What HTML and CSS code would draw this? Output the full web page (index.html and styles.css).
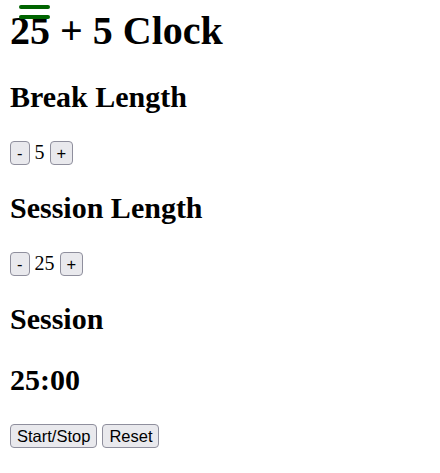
FILE: index.html
```html
<!DOCTYPE html>
<html lang="en">
<head>
<meta charset="utf-8">
<title>25 + 5 Clock</title>
<link rel="stylesheet" href="styles.css">
</head>
<body>
<div class="menu-icon" aria-hidden="true"><span class="bar"></span><span class="bar"></span></div>
<div class="app">
  <h1 class="title">25 + 5 Clock</h1>
  <h2 class="label">Break Length</h2>
  <div class="row">
    <button class="btn">-</button> <span class="value">5</span> <button class="btn">+</button>
  </div>
  <h2 class="label">Session Length</h2>
  <div class="row">
    <button class="btn">-</button> <span class="value">25</span> <button class="btn">+</button>
  </div>
  <h2 class="label">Session</h2>
  <h2 class="label">25:00</h2>
  <div class="row">
    <button class="btn">Start/Stop</button> <button class="btn">Reset</button>
  </div>
</div>
</body>
</html>
```
FILE: styles.css
```css
html, body {
  background: #ffffff;
}
body {
  margin: 0 10px;
  font-family: "Liberation Serif", "Times New Roman", serif;
  font-size: 20px;
  color: #000;
  position: relative;
}
.app {
  padding-top: 8px;
}
.title {
  font-size: 40px;
  line-height: 46px;
  font-weight: bold;
  margin: 0 0 25px;
}
.label {
  font-size: 30px;
  line-height: 36px;
  font-weight: bold;
  margin: 25px 0;
}
.row {
  height: 25px;
  line-height: 24px;
  margin: 25px 0;
  font-family: "Liberation Serif", "Times New Roman", serif;
}
.btn {
  display: inline-block;
  box-sizing: border-box;
  height: 24px;
  font-family: "Liberation Sans", Arial, sans-serif;
  font-size: 16.5px;
  line-height: 20px;
  color: #000;
  background: #e9e9ed;
  border: 1px solid #8f8f9d;
  border-radius: 4px;
  padding: 1px 6px;
  margin: 0;
  vertical-align: baseline;
}
.value {
  font-family: "Liberation Serif", "Times New Roman", serif;
  font-size: 20px;
}
.menu-icon {
  position: absolute;
  left: 9px;
  top: 5px;
  width: 31px;
  display: flex;
  flex-direction: column;
  gap: 6.5px;
}
.bar {
  display: block;
  height: 3.5px;
  border-radius: 2px;
  background: #006400;
}
```
